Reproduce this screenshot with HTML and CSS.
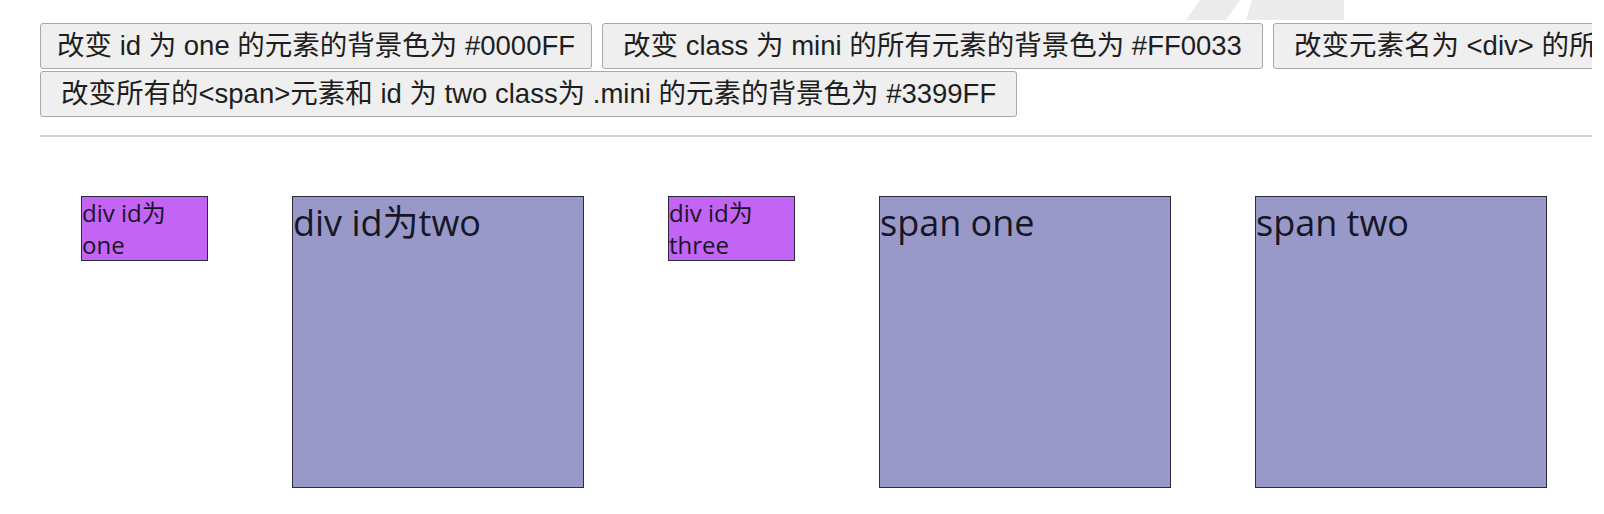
FILE: index.html
```html
<!DOCTYPE html>
<html lang="zh-CN">
<head>
  <meta charset="UTF-8">
  <meta name="viewport" content="width=device-width, initial-scale=1.0">
  <title>jQuery 选择器练习</title>
  <link rel="stylesheet" href="styles.css">
</head>
<body>
  <svg class="watermark" width="200" height="22" viewBox="0 0 200 22">
    <polygon points="40,0 80,0 66,20 26,20" />
    <polygon points="92,0 184,0 184,20 86,20" />
  </svg>

  <div class="page">
    <div class="toolbar">
      <div class="btn-row">
        <button id="btn1">改变 id 为 one 的元素的背景色为 #0000FF</button>
        <button id="btn2" class="wide">改变 class 为 mini 的所有元素的背景色为 #FF0033</button>
        <button id="btn3" class="wide">改变元素名为 &lt;div&gt; 的所有元素的背景色为 #00FFFF</button>
      </div>
      <div class="btn-row">
        <button id="btn4" class="wide">改变所有的&lt;span&gt;元素和 id 为 two class为 .mini 的元素的背景色为 #3399FF</button>
      </div>
    </div>

    <hr class="divider">

    <div class="stage">
      <div class="box mini" id="one">div id为one</div>
      <div class="box big" id="two">div id为two</div>
      <div class="box mini" id="three">div id为three</div>
      <span class="box big">span one</span>
      <span class="box big">span two</span>
    </div>
  </div>
</body>
</html>
```

FILE: styles.css
```css
:root {
  --btn-bg: #efefef;
  --btn-border: #a9a9a9;
  --mini-bg: #c464f5;
  --big-bg: #9899c9;
  --box-border: #2b2b3b;
  --text: #161626;
}
body {
  margin: 0;
  background: #ffffff;
  font-family: "Liberation Sans", "Noto Sans CJK SC", sans-serif;
}
.watermark {
  position: absolute;
  top: 0;
  left: 1160px;
  fill: #ebebeb;
}
.page {
  width: 1552px;
  margin-left: 40px;
  padding-top: 23px;
  overflow: hidden;
}
.btn-row {
  display: flex;
  gap: 10px;
  margin-bottom: 2px;
}
.btn-row button {
  flex: none;
  font-family: "Liberation Sans", "Noto Sans CJK SC", sans-serif;
  font-size: 27.5px;
  line-height: 32px;
  padding: 6px 16px;
  color: #1e1e1e;
  background: var(--btn-bg);
  border: 1px solid var(--btn-border);
  border-radius: 3px;
  white-space: nowrap;
}
.btn-row button.wide {
  padding: 6px 20px;
}
.divider {
  border: none;
  border-top: 2px solid #d3d3d3;
  margin: 18px 0 0;
}
.stage {
  display: flex;
  align-items: flex-start;
  gap: 84px;
  padding-left: 41px;
  margin-top: 59px;
}
.box {
  display: block;
  flex: none;
  border: 1px solid var(--box-border);
  color: var(--text);
  font-family: "Open Sans", "Noto Sans CJK SC", sans-serif;
}
.mini {
  width: 125px;
  font-size: 24px;
  line-height: 31.5px;
  background: var(--mini-bg);
}
.big {
  width: 290px;
  height: 290px;
  font-size: 36px;
  line-height: 52px;
  background: var(--big-bg);
}
```
